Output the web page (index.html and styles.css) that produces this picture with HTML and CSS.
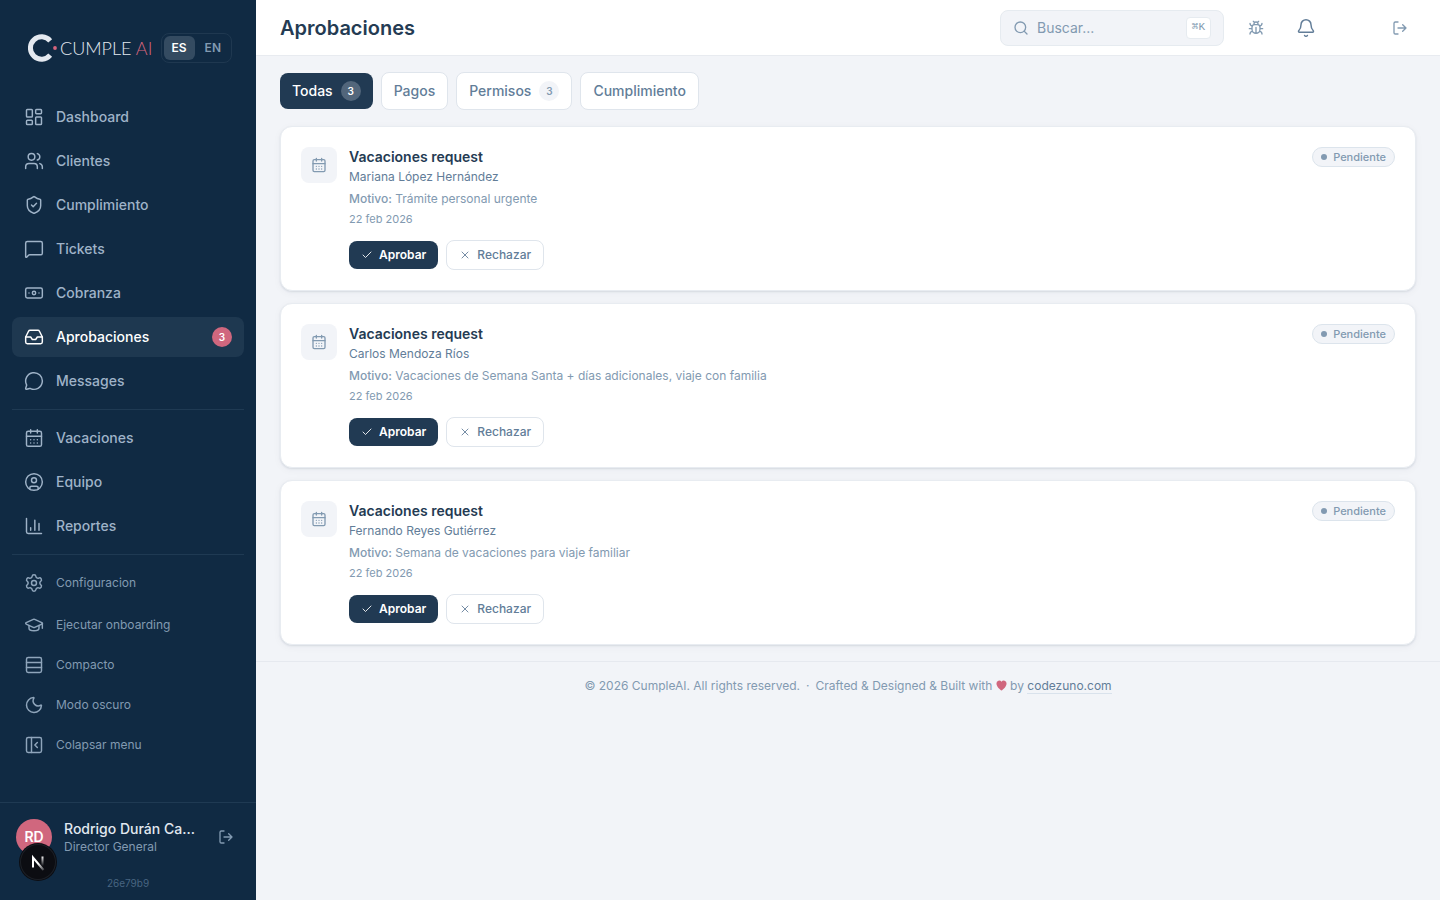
FILE: index.html
```html
<!DOCTYPE html>
<html lang="es">
  <head>
    <meta charset="UTF-8" />
    <meta name="viewport" content="width=device-width, initial-scale=1" />
    <title>Aprobaciones</title>
    <link rel="stylesheet" href="styles.css">
  </head>
  <body>
    <!-- Icon sprite -->
    <svg class="sprite" aria-hidden="true">
      <symbol id="i-dashboard" viewBox="0 0 24 24"><rect width="7" height="9" x="3" y="3" rx="1"/><rect width="7" height="5" x="14" y="3" rx="1"/><rect width="7" height="9" x="14" y="12" rx="1"/><rect width="7" height="5" x="3" y="16" rx="1"/></symbol>
      <symbol id="i-users" viewBox="0 0 24 24"><path d="M16 21v-2a4 4 0 0 0-4-4H6a4 4 0 0 0-4 4v2"/><circle cx="9" cy="7" r="4"/><path d="M22 21v-2a4 4 0 0 0-3-3.87"/><path d="M16 3.13a4 4 0 0 1 0 7.75"/></symbol>
      <symbol id="i-shield" viewBox="0 0 24 24"><path d="M20 13c0 5-3.5 7.5-7.66 8.95a1 1 0 0 1-.67-.01C7.5 20.5 4 18 4 13V6a1 1 0 0 1 1-1c2 0 4.5-1.2 6.24-2.72a1.17 1.17 0 0 1 1.52 0C14.51 3.81 17 5 19 5a1 1 0 0 1 1 1z"/><path d="m9 12 2 2 4-4"/></symbol>
      <symbol id="i-ticket" viewBox="0 0 24 24"><path d="M22 17a2 2 0 0 1-2 2H6.828a2 2 0 0 0-1.414.586l-2.202 2.202A.71.71 0 0 1 2 21.286V5a2 2 0 0 1 2-2h16a2 2 0 0 1 2 2z"/></symbol>
      <symbol id="i-banknote" viewBox="0 0 24 24"><rect width="20" height="12" x="2" y="6" rx="2"/><circle cx="12" cy="12" r="2"/><path d="M6 12h.01M18 12h.01"/></symbol>
      <symbol id="i-inbox" viewBox="0 0 24 24"><path d="M22 12h-6l-2 3h-4l-2-3H2"/><path d="M5.45 5.11 2 12v6a2 2 0 0 0 2 2h16a2 2 0 0 0 2-2v-6l-3.45-6.89A2 2 0 0 0 16.76 4H7.24a2 2 0 0 0-1.79 1.11z"/></symbol>
      <symbol id="i-message" viewBox="0 0 24 24"><path d="M2.992 16.342a2 2 0 0 1 .094 1.167l-1.065 3.29a1 1 0 0 0 1.236 1.168l3.413-.998a2 2 0 0 1 1.099.092 10 10 0 1 0-4.777-4.719"/></symbol>
      <symbol id="i-calendar" viewBox="0 0 24 24"><path d="M8 2v4M16 2v4"/><rect width="18" height="18" x="3" y="4" rx="2"/><path d="M3 10h18M8 14h.01M12 14h.01M16 14h.01M8 18h.01M12 18h.01M16 18h.01"/></symbol>
      <symbol id="i-user" viewBox="0 0 24 24"><circle cx="12" cy="12" r="10"/><circle cx="12" cy="10" r="3"/><path d="M7 20.662V19a2 2 0 0 1 2-2h6a2 2 0 0 1 2 2v1.662"/></symbol>
      <symbol id="i-chart" viewBox="0 0 24 24"><path d="M3 3v16a2 2 0 0 0 2 2h16M18 17V9M13 17V5M8 17v-3"/></symbol>
      <symbol id="i-settings" viewBox="0 0 24 24"><path d="M9.671 4.136a2.34 2.34 0 0 1 4.659 0 2.34 2.34 0 0 0 3.319 1.915 2.34 2.34 0 0 1 2.33 4.033 2.34 2.34 0 0 0 0 3.831 2.34 2.34 0 0 1-2.33 4.033 2.34 2.34 0 0 0-3.319 1.915 2.34 2.34 0 0 1-4.659 0 2.34 2.34 0 0 0-3.32-1.915 2.34 2.34 0 0 1-2.33-4.033 2.34 2.34 0 0 0 0-3.831A2.34 2.34 0 0 1 6.35 6.051a2.34 2.34 0 0 0 3.319-1.915"/><circle cx="12" cy="12" r="3"/></symbol>
      <symbol id="i-cap" viewBox="0 0 24 24"><path d="M21.42 10.922a1 1 0 0 0-.019-1.838L12.83 5.18a2 2 0 0 0-1.66 0L2.6 9.08a1 1 0 0 0 0 1.832l8.57 3.908a2 2 0 0 0 1.66 0z"/><path d="M22 10v6"/><path d="M6 12.5V16a6 3 0 0 0 12 0v-3.5"/></symbol>
      <symbol id="i-rows" viewBox="0 0 24 24"><rect width="18" height="18" x="3" y="3" rx="2"/><path d="M21 9H3M21 15H3"/></symbol>
      <symbol id="i-moon" viewBox="0 0 24 24"><path d="M20.985 12.486a9 9 0 1 1-9.473-9.472c.405-.022.617.46.402.803a6 6 0 0 0 8.268 8.268c.344-.215.825-.004.803.401"/></symbol>
      <symbol id="i-panel" viewBox="0 0 24 24"><rect width="18" height="18" x="3" y="3" rx="2"/><path d="M9 3v18M16 15l-3-3 3-3"/></symbol>
      <symbol id="i-logout" viewBox="0 0 24 24"><path d="m16 17 5-5-5-5M21 12H9M9 21H5a2 2 0 0 1-2-2V5a2 2 0 0 1 2-2h4"/></symbol>
      <symbol id="i-search" viewBox="0 0 24 24"><path d="m21 21-4.34-4.34"/><circle cx="11" cy="11" r="8"/></symbol>
      <symbol id="i-bug" viewBox="0 0 24 24"><path d="M12 20v-9M14 7a4 4 0 0 1 4 4v3a6 6 0 0 1-12 0v-3a4 4 0 0 1 4-4zM14.12 3.88 16 2M21 21a4 4 0 0 0-3.81-4M21 5a4 4 0 0 1-3.55 3.97M22 13h-4M3 21a4 4 0 0 1 3.81-4M3 5a4 4 0 0 0 3.55 3.97M6 13H2M8 2l1.88 1.88M9 7.13V6a3 3 0 1 1 6 0v1.13"/></symbol>
      <symbol id="i-bell" viewBox="0 0 24 24"><path d="M10.268 21a2 2 0 0 0 3.464 0"/><path d="M3.262 15.326A1 1 0 0 0 4 17h16a1 1 0 0 0 .74-1.673C19.41 13.956 18 12.499 18 8A6 6 0 0 0 6 8c0 4.499-1.411 5.956-2.738 7.326"/></symbol>
      <symbol id="i-check" viewBox="0 0 24 24"><path d="M20 6 9 17l-5-5"/></symbol>
      <symbol id="i-x" viewBox="0 0 24 24"><path d="M18 6 6 18M6 6l12 12"/></symbol>
    </svg>

    <div class="app">
      <aside class="sidebar">
        <div class="brand">
          <a class="logo" href="#">
            <svg class="logo-mark" viewBox="0 0 30 28" aria-hidden="true">
              <path d="M22.200 6.800A11.200 11.200 0 1 0 22.200 21.200" fill="none" stroke="#e4e9f0" stroke-width="5"/>
              <circle cx="27" cy="14" r="1.900" fill="#d6657d"/>
            </svg>
            <span class="logo-text">CUMPLE <span class="accent">AI</span></span>
          </a>
          <div class="lang">
            <button class="lang-btn active" type="button">ES</button>
            <button class="lang-btn" type="button">EN</button>
          </div>
        </div>

        <nav class="nav">
          <div class="nav-group">
            <a class="nav-item" href="#"><svg class="icon"><use href="#i-dashboard"/></svg>Dashboard</a>
            <a class="nav-item" href="#"><svg class="icon"><use href="#i-users"/></svg>Clientes</a>
            <a class="nav-item" href="#"><svg class="icon"><use href="#i-shield"/></svg>Cumplimiento</a>
            <a class="nav-item" href="#"><svg class="icon"><use href="#i-ticket"/></svg>Tickets</a>
            <a class="nav-item" href="#"><svg class="icon"><use href="#i-banknote"/></svg>Cobranza</a>
            <a class="nav-item active" href="#"><svg class="icon"><use href="#i-inbox"/></svg>Aprobaciones<span class="nav-badge">3</span></a>
            <a class="nav-item" href="#"><svg class="icon"><use href="#i-message"/></svg>Messages</a>
          </div>
          <div class="nav-group">
            <a class="nav-item" href="#"><svg class="icon"><use href="#i-calendar"/></svg>Vacaciones</a>
            <a class="nav-item" href="#"><svg class="icon"><use href="#i-user"/></svg>Equipo</a>
            <a class="nav-item" href="#"><svg class="icon"><use href="#i-chart"/></svg>Reportes</a>
          </div>
          <div class="nav-group nav-tools">
            <a class="nav-item nav-settings" href="#"><svg class="icon"><use href="#i-settings"/></svg>Configuracion</a>
            <button class="nav-item" type="button"><svg class="icon"><use href="#i-cap"/></svg>Ejecutar onboarding</button>
            <button class="nav-item" type="button"><svg class="icon"><use href="#i-rows"/></svg>Compacto</button>
            <button class="nav-item" type="button"><svg class="icon"><use href="#i-moon"/></svg>Modo oscuro</button>
            <button class="nav-item" type="button"><svg class="icon"><use href="#i-panel"/></svg>Colapsar menu</button>
          </div>
        </nav>

        <div class="account">
          <div class="account-row">
            <div class="avatar">RD</div>
            <div class="account-info">
              <div class="account-name">Rodrigo Durán Ca...</div>
              <div class="account-role">Director General</div>
            </div>
            <button class="icon-btn" type="button" aria-label="Cerrar sesión"><svg class="icon icon-sm"><use href="#i-logout"/></svg></button>
          </div>
          <div class="version">26e79b9</div>
        </div>
      </aside>

      <div class="page">
        <header class="topbar">
          <h1>Aprobaciones</h1>
          <div class="topbar-actions">
            <label class="search">
              <svg class="icon icon-sm"><use href="#i-search"/></svg>
              <input type="text" placeholder="Buscar..." aria-label="Buscar" />
              <kbd>⌘K</kbd>
            </label>
            <button class="icon-btn" type="button" aria-label="Reportar error"><svg class="icon icon-sm"><use href="#i-bug"/></svg></button>
            <button class="icon-btn bell" type="button" aria-label="Notificaciones"><svg class="icon"><use href="#i-bell"/></svg></button>
            <button class="icon-btn exit" type="button" aria-label="Salir"><svg class="icon icon-sm"><use href="#i-logout"/></svg></button>
          </div>
        </header>

        <main class="content">
          <div class="tabs">
            <button class="tab active" type="button">Todas <span class="count">3</span></button>
            <button class="tab" type="button">Pagos</button>
            <button class="tab" type="button">Permisos <span class="count">3</span></button>
            <button class="tab" type="button">Cumplimiento</button>
          </div>

          <div class="cards">
            <article class="card">
              <div class="card-icon"><svg class="icon icon-sm"><use href="#i-calendar"/></svg></div>
              <div class="card-body">
                <h2>Vacaciones request</h2>
                <p class="person">Mariana López Hernández</p>
                <p class="reason"><strong>Motivo:</strong> Trámite personal urgente</p>
                <p class="date">22 feb 2026</p>
                <div class="card-actions">
                  <button class="btn btn-primary" type="button"><svg class="icon icon-xs"><use href="#i-check"/></svg>Aprobar</button>
                  <button class="btn btn-outline" type="button"><svg class="icon icon-xs"><use href="#i-x"/></svg>Rechazar</button>
                </div>
              </div>
              <span class="status">Pendiente</span>
            </article>

            <article class="card">
              <div class="card-icon"><svg class="icon icon-sm"><use href="#i-calendar"/></svg></div>
              <div class="card-body">
                <h2>Vacaciones request</h2>
                <p class="person">Carlos Mendoza Ríos</p>
                <p class="reason"><strong>Motivo:</strong> Vacaciones de Semana Santa + días adicionales, viaje con familia</p>
                <p class="date">22 feb 2026</p>
                <div class="card-actions">
                  <button class="btn btn-primary" type="button"><svg class="icon icon-xs"><use href="#i-check"/></svg>Aprobar</button>
                  <button class="btn btn-outline" type="button"><svg class="icon icon-xs"><use href="#i-x"/></svg>Rechazar</button>
                </div>
              </div>
              <span class="status">Pendiente</span>
            </article>

            <article class="card">
              <div class="card-icon"><svg class="icon icon-sm"><use href="#i-calendar"/></svg></div>
              <div class="card-body">
                <h2>Vacaciones request</h2>
                <p class="person">Fernando Reyes Gutiérrez</p>
                <p class="reason"><strong>Motivo:</strong> Semana de vacaciones para viaje familiar</p>
                <p class="date">22 feb 2026</p>
                <div class="card-actions">
                  <button class="btn btn-primary" type="button"><svg class="icon icon-xs"><use href="#i-check"/></svg>Aprobar</button>
                  <button class="btn btn-outline" type="button"><svg class="icon icon-xs"><use href="#i-x"/></svg>Rechazar</button>
                </div>
              </div>
              <span class="status">Pendiente</span>
            </article>
          </div>
        </main>

        <footer class="footer">
          <span>© 2026 CumpleAI. All rights reserved.</span>
          <span>·</span>
          <span>Crafted &amp; Designed &amp; Built with <svg class="heart" viewBox="0 0 24 24" role="img" aria-label="love"><path d="M12 23C9 21 1 14.500 1 7.500a6 6 0 0 1 11-3.500A6 6 0 0 1 23 7.500c0 7-8 13.500-11 15.500z"/></svg> by <a href="#">codezuno.com</a></span>
        </footer>
      </div>
    </div>

    <!-- Dev tools badge -->
    <button class="dev-badge" type="button" aria-label="Dev tools">
      <svg viewBox="0 0 36 36" fill="none" aria-hidden="true">
        <defs>
          <linearGradient id="n-diag" x1="19" y1="19" x2="24" y2="26" gradientUnits="userSpaceOnUse"><stop stop-color="#fff"/><stop offset="1" stop-color="#fff" stop-opacity="0.2"/></linearGradient>
          <linearGradient id="n-stem" x1="23" y1="12" x2="23" y2="22" gradientUnits="userSpaceOnUse"><stop stop-color="#fff"/><stop offset="1" stop-color="#fff" stop-opacity="0"/></linearGradient>
        </defs>
        <path d="M13 23.500V13.500L23.500 26" stroke="url(#n-diag)" stroke-width="2"/>
        <path d="M22.500 12.500V22" stroke="url(#n-stem)" stroke-width="2"/>
      </svg>
    </button>
  </body>
</html>
```
FILE: styles.css
```css
* {
  margin: 0;
  padding: 0;
  box-sizing: border-box;
}

body {
  font-family: Inter, "Noto Sans", sans-serif;
  font-size: 14px;
  line-height: 20px;
  background: #f2f4f8;
  color: #243b53;
}

button,
input {
  font: inherit;
  color: inherit;
  background: none;
  border: none;
}

button {
  cursor: pointer;
}

a {
  color: inherit;
  text-decoration: none;
}

.sprite {
  display: none;
}

.icon {
  width: 20px;
  height: 20px;
  flex-shrink: 0;
  fill: none;
  stroke: currentColor;
  stroke-width: 1.75;
  stroke-linecap: round;
  stroke-linejoin: round;
}

.icon-sm {
  width: 16px;
  height: 16px;
  stroke-width: 2;
}

.icon-xs {
  width: 12px;
  height: 12px;
}

.app {
  display: flex;
  min-height: 100vh;
}

/* Sidebar */
.sidebar {
  width: 256px;
  height: 100vh;
  position: sticky;
  top: 0;
  flex-shrink: 0;
  display: flex;
  flex-direction: column;
  background: #102a43;
  color: #9fb3c8;
}

.brand {
  display: flex;
  align-items: center;
  justify-content: space-between;
  padding: 33px 24px 34px 28px;
}

.logo {
  display: flex;
  align-items: center;
  gap: 2px;
}

.logo-mark {
  width: 30px;
  height: 28px;
}

.logo-text {
  font-family: Lato, "Noto Sans", sans-serif;
  font-size: 18px;
  font-weight: 300;
  line-height: 28px;
  color: #e4e9f0;
  white-space: nowrap;
}

.accent {
  color: #d6657d;
}

.lang {
  display: flex;
  gap: 2px;
  padding: 2px;
  border: 1px solid #1f3850;
  border-radius: 8px;
}

.lang-btn {
  padding: 4px 8px;
  border-radius: 6px;
  font-size: 12px;
  font-weight: 600;
  line-height: 16px;
  color: #829ab1;
}

.lang-btn.active {
  background: #344b61;
  color: #fff;
}

.nav {
  flex: 1;
  padding: 0 12px;
  overflow: hidden;
}

.nav-group {
  display: flex;
  flex-direction: column;
  gap: 4px;
}

.nav-group + .nav-group {
  margin-top: 8px;
  padding-top: 8px;
  border-top: 1px solid #1f3a53;
}

.nav-item {
  display: flex;
  align-items: center;
  gap: 12px;
  padding: 10px 12px;
  border-radius: 8px;
  font-weight: 500;
  text-align: left;
}

.nav-item.active {
  background: #1e3850;
  color: #fff;
}

.nav-badge {
  min-width: 20px;
  margin-left: auto;
  border-radius: 10px;
  background: #d0677e;
  color: #fff;
  font-size: 10px;
  font-weight: 600;
  text-align: center;
}

.nav-tools {
  gap: 0;
}

.nav-tools .nav-item {
  font-size: 12px;
  font-weight: 400;
  color: #829ab1;
}

.nav-tools .icon {
  color: #8fa5bb;
}

.nav-settings {
  margin-bottom: 2px;
}

.account {
  padding: 16px 16px 9px;
  border-top: 1px solid #1f3a53;
}

.account-row {
  display: flex;
  align-items: center;
  gap: 12px;
}

.avatar {
  width: 36px;
  height: 36px;
  flex-shrink: 0;
  border-radius: 50%;
  background: #d0677e;
  color: #fff;
  font-weight: 600;
  line-height: 36px;
  text-align: center;
}

.account-info {
  flex: 1;
  min-width: 0;
}

.account-name {
  color: #e1e8f0;
  font-weight: 500;
  white-space: nowrap;
}

.account-role {
  color: #829ab1;
  font-size: 12px;
  line-height: 16px;
}

.icon-btn {
  display: flex;
  padding: 8px;
  border-radius: 8px;
  color: #829ab1;
}

.account .icon-btn {
  margin-right: -2px;
}

.version {
  margin-top: 20px;
  color: #486581;
  font-size: 10px;
  line-height: 16px;
  text-align: center;
}

/* Page */
.page {
  flex: 1;
  min-width: 0;
}

.topbar {
  display: flex;
  align-items: center;
  justify-content: space-between;
  height: 56px;
  padding: 0 24px;
  background: #fff;
  border-bottom: 1px solid #e8ebf0;
}

.topbar h1 {
  font-size: 20px;
  font-weight: 600;
  line-height: 28px;
}

.topbar-actions {
  display: flex;
  align-items: center;
  gap: 16px;
}

.search {
  display: flex;
  align-items: center;
  gap: 8px;
  width: 224px;
  height: 36px;
  padding: 0 12px;
  border: 1px solid #e6ebf0;
  border-radius: 8px;
  background: #f2f4f8;
  color: #829ab1;
}

.search input {
  flex: 1;
  min-width: 0;
  outline: none;
}

.search input::placeholder {
  color: #829ab1;
  opacity: 1;
}

.search kbd {
  padding: 0 5px 2px;
  border: 1px solid #e6ebf0;
  border-radius: 4px;
  background: #fff;
  font-family: "Liberation Mono", "DejaVu Sans Mono", monospace;
  font-size: 11px;
  line-height: 18px;
}

.bell {
  color: #627d98;
}

.exit {
  margin-left: 44px;
}

.content {
  padding: 16px 24px;
}

.tabs {
  display: flex;
  align-items: center;
  gap: 8px;
  margin-bottom: 16px;
}

.tab {
  display: flex;
  align-items: center;
  gap: 8px;
  padding: 8px 12px;
  border: 1px solid #dfe5ec;
  border-radius: 8px;
  background: #fff;
  color: #627d98;
  font-weight: 500;
}

.tab.active {
  border: none;
  background: #213a53;
  color: #fff;
}

.count {
  min-width: 20px;
  border-radius: 10px;
  background: #f2f4f8;
  color: #829ab1;
  font-size: 10px;
  font-weight: 600;
  text-align: center;
}

.tab.active .count {
  background: #52667b;
  color: #fff;
}

.cards {
  display: flex;
  flex-direction: column;
  gap: 12px;
}

.card {
  display: flex;
  align-items: flex-start;
  gap: 12px;
  padding: 20px;
  border: 1px solid #e8ecf1;
  border-radius: 12px;
  background: #fff;
  box-shadow: 0 1px 2px rgba(16, 42, 67, 0.1), 0 2px 8px rgba(16, 42, 67, 0.04);
}

.card-icon {
  padding: 10px;
  border-radius: 8px;
  background: #f2f4f8;
  color: #829ab1;
}

.card-icon .icon {
  display: block;
}

.card-body {
  flex: 1;
  min-width: 0;
}

.card h2 {
  font-size: 14px;
  font-weight: 600;
  line-height: 20px;
}

.person {
  margin-top: 2px;
  color: #627d98;
  font-size: 12px;
  line-height: 16px;
}

.reason {
  margin-top: 4px;
  color: #829ab1;
  font-size: 12px;
  line-height: 20px;
}

.reason strong {
  font-weight: 500;
}

.date {
  margin-top: 2px;
  color: #829ab1;
  font-size: 11px;
  line-height: 16px;
}

.card-actions {
  display: flex;
  align-items: center;
  gap: 8px;
  margin-top: 13px;
}

.btn {
  display: flex;
  align-items: center;
  gap: 6px;
  padding: 6px 12px;
  border-radius: 8px;
  font-size: 12px;
  line-height: 16px;
}

.btn-primary {
  background: #213a53;
  color: #fff;
  font-weight: 600;
}

.btn-outline {
  border: 1px solid #dfe5ec;
  background: #fff;
  color: #627d98;
  font-weight: 500;
}

.status {
  display: flex;
  align-items: center;
  gap: 6px;
  padding: 1px 8px;
  border: 1px solid #dce4ec;
  border-radius: 10px;
  background: #f2f4f8;
  color: #829ab1;
  font-size: 11px;
  font-weight: 500;
  line-height: 16px;
}

.status::before {
  content: "";
  width: 6px;
  height: 6px;
  border-radius: 50%;
  background: #829ab1;
}

.footer {
  display: flex;
  justify-content: center;
  gap: 6px;
  padding: 16px 24px;
  border-top: 1px solid #e6e9ef;
  color: #829ab1;
  font-size: 12px;
  line-height: 16px;
}

.footer a {
  color: #627d98;
  border-bottom: 1px solid #d9e2ec;
}

.heart {
  width: 11px;
  height: 11px;
  vertical-align: -1px;
  fill: #d0677e;
}

.dev-badge {
  position: fixed;
  left: 20px;
  bottom: 20px;
  width: 36px;
  height: 36px;
  border-radius: 50%;
  background: #0c0d12;
  box-shadow: inset 0 0 0 1px #1c2027, 0 0 0 1px #0c0d12;
}

.dev-badge svg {
  display: block;
  width: 36px;
  height: 36px;
}
```
